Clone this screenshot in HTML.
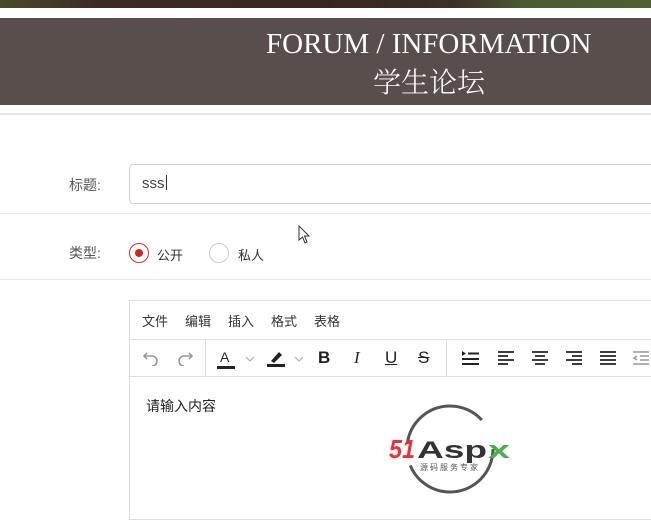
<!DOCTYPE html>
<html><head><meta charset="utf-8"><style>
*{margin:0;padding:0;box-sizing:border-box}
body{width:651px;height:505px;overflow:hidden;background:#fff;font-family:"Liberation Sans","Noto Sans CJK SC",sans-serif;position:relative;color:#333}
.top{position:absolute;left:0;top:0;width:651px;height:8px;background:linear-gradient(90deg,#4a4a2a 0%,#3e2a25 15%,#3a2420 50%,#3e2f28 70%,#4b5a30 80%,#50602e 100%)}
.band{position:absolute;left:0;top:18px;width:651px;height:87px;background:#584f4c;color:#fff;font-family:"Liberation Serif","Noto Serif CJK SC",serif}
.band .en{position:absolute;left:266px;top:10px;font-size:29px;white-space:nowrap}
.band .cn{position:absolute;left:373px;top:43px;font-size:28px;font-weight:300}
.abs{position:absolute}
.hl{position:absolute;left:0;width:651px;height:1px;background:#e8e8e8}
.lbl{font-size:14px;color:#555}
.input{left:129px;top:164px;width:540px;height:40px;border:1px solid #d0d0d0;border-radius:4px;font-size:15px;padding:10px 0 0 12px;color:#444}
.radio{width:20px;height:20px;border:1px solid #ccc;border-radius:50%}
.ed{left:129px;top:300px;width:540px;height:220px;border:1px solid #ddd}
.menu{position:absolute;left:0;top:0;width:100%;height:39px;border-bottom:1px solid #ddd;font-size:13px;color:#333}
.menu span{position:absolute;top:10px}
.tb{position:absolute;left:0;top:39px;width:100%;height:37px;border-bottom:1px solid #ddd}
.tb span{position:absolute;top:8px;font-size:17px;color:#222}
.tb svg{position:absolute;top:10px}
</style></head><body>
<div class="top"></div>
<div class="band"><div class="en">FORUM / INFORMATION</div><div class="cn">学生论坛</div></div>
<div class="hl" style="top:113px;background:#e4e4e4;height:2px"></div>
<div class="abs lbl" style="left:69px;top:175px">标题:</div>
<div class="abs input">sss<span style="border-left:1px solid #333;margin-left:1px;height:15px;display:inline-block;vertical-align:-2px"></span></div>
<div class="hl" style="top:213px"></div>
<svg class="abs" style="left:298px;top:225px" width="14" height="20" viewBox="0 0 14 20"><path d="M1 1 L1 15 L4.5 12 L7 18 L9 17 L6.5 11 L11 11 Z" fill="#fff" stroke="#333" stroke-width="1"/></svg>
<div class="abs lbl" style="left:69px;top:243px">类型:</div>
<div class="abs radio" style="left:129px;top:243px;border-color:#c33"><div style="width:8px;height:8px;background:#c8281e;border-radius:50%;margin:5px"></div></div>
<div class="abs" style="left:157px;top:245px;font-size:13px">公开</div>
<div class="abs radio" style="left:209px;top:243px"></div>
<div class="abs" style="left:238px;top:245px;font-size:13px">私人</div>
<div class="hl" style="top:279px"></div>
<div class="abs ed">
<div class="menu"><span style="left:12px">文件</span><span style="left:55px">编辑</span><span style="left:98px">插入</span><span style="left:141px">格式</span><span style="left:184px">表格</span></div>
<div class="tb">
<svg style="left:12px" width="18" height="16" viewBox="0 0 18 16"><path d="M5 3 L2 6 L5 9 M2 6 H10 A5 5 0 0 1 10 16" fill="none" stroke="#999" stroke-width="1.6"/></svg>
<svg style="left:46px" width="18" height="16" viewBox="0 0 18 16"><path d="M13 3 L16 6 L13 9 M16 6 H8 A5 5 0 0 0 8 16" fill="none" stroke="#999" stroke-width="1.6"/></svg>
<div style="position:absolute;left:75px;top:0;width:1px;height:36px;background:#ddd"></div>
<span style="left:90px;top:9px;font-size:14px">A</span><div style="position:absolute;left:87px;top:26px;width:18px;height:3px;background:#222"></div>
<svg style="left:115px;top:16px" width="10" height="6"><path d="M1 1 L5 5 L9 1" fill="none" stroke="#aaa"/></svg>
<svg style="left:136px;top:9px" width="20" height="18" viewBox="0 0 20 18"><path d="M5 12 L13 3 L16 6 L8 14 Z" fill="#222"/><rect x="1" y="15" width="18" height="3" fill="#222"/></svg>
<svg style="left:164px;top:16px" width="10" height="6"><path d="M1 1 L5 5 L9 1" fill="none" stroke="#aaa"/></svg>
<span style="left:188px;font-weight:bold">B</span><span style="left:224px;font-style:italic;font-family:'Liberation Serif',serif">I</span><span style="left:255px;text-decoration:underline">U</span><span style="left:288px;text-decoration:line-through">S</span>
<div style="position:absolute;left:316px;top:0;width:1px;height:36px;background:#ddd"></div>
<svg style="left:331px" width="18" height="16"><path d="M1 1 L5 3.5 L1 6 Z" fill="#222"/><path d="M7 3.5H18M1 9H18M1 14H18" stroke="#222" stroke-width="2"/></svg>
<svg style="left:367px" width="18" height="16"><path d="M1 2H17M1 6H11M1 10H17M1 14H11" stroke="#222" stroke-width="1.8"/></svg>
<svg style="left:401px" width="18" height="16"><path d="M1 2H17M4 6H14M1 10H17M4 14H14" stroke="#222" stroke-width="1.8"/></svg>
<svg style="left:435px" width="18" height="16"><path d="M1 2H17M7 6H17M1 10H17M7 14H17" stroke="#222" stroke-width="1.8"/></svg>
<svg style="left:469px" width="18" height="16"><path d="M1 2H17M1 6H17M1 10H17M1 14H17" stroke="#222" stroke-width="1.8"/></svg>
<svg style="left:502px" width="18" height="16"><path d="M1 2H17M8 6H17M8 10H17M1 14H17M5 6 L2 8 L5 10" fill="none" stroke="#999" stroke-width="1.5"/></svg>
</div>
<div style="position:absolute;left:16px;top:95px;font-size:14px;color:#222">请输入内容</div>
<svg style="position:absolute;left:256px;top:100px" width="130" height="95" viewBox="0 0 130 95">
<circle cx="64" cy="48" r="43" fill="none" stroke="#555" stroke-width="3" stroke-dasharray="118 22 98 32"/>
<text x="3" y="57" font-family="Liberation Sans,sans-serif" font-weight="bold" font-style="italic" font-size="26" fill="#e8333a" textLength="26" lengthAdjust="spacingAndGlyphs">51</text>
<text x="31" y="57" font-family="Liberation Sans,sans-serif" font-weight="bold" font-size="24" fill="#333" textLength="70" lengthAdjust="spacingAndGlyphs">Asp</text>
<text x="102" y="57" font-family="Liberation Sans,sans-serif" font-weight="bold" font-size="24" fill="#4bb04b" textLength="22" lengthAdjust="spacingAndGlyphs">x</text>
<text x="34" y="69" font-size="8" fill="#555" textLength="58">源码服务专家</text>
</svg>
</div>
</body></html>
